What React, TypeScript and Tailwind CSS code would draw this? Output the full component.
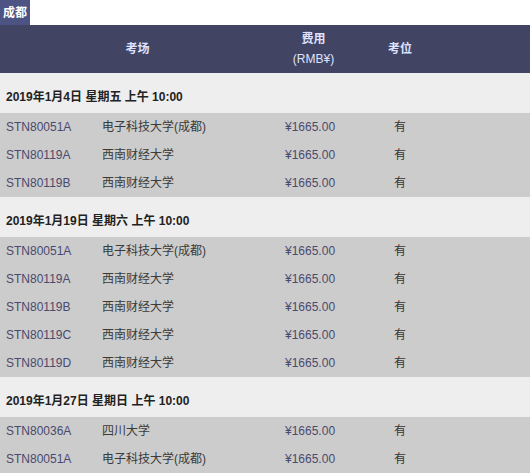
import React from "react";

type Row = { code: string; name: string };
type Group = { date: string; rows: Row[] };

const groups: Group[] = [
  {
    date: "2019年1月4日 星期五 上午 10:00",
    rows: [
      { code: "STN80051A", name: "电子科技大学(成都)" },
      { code: "STN80119A", name: "西南财经大学" },
      { code: "STN80119B", name: "西南财经大学" },
    ],
  },
  {
    date: "2019年1月19日 星期六 上午 10:00",
    rows: [
      { code: "STN80051A", name: "电子科技大学(成都)" },
      { code: "STN80119A", name: "西南财经大学" },
      { code: "STN80119B", name: "西南财经大学" },
      { code: "STN80119C", name: "西南财经大学" },
      { code: "STN80119D", name: "西南财经大学" },
    ],
  },
  {
    date: "2019年1月27日 星期日 上午 10:00",
    rows: [
      { code: "STN80036A", name: "四川大学" },
      { code: "STN80051A", name: "电子科技大学(成都)" },
    ],
  },
];

const font = { fontFamily: '"Liberation Sans", "Noto Sans CJK SC", sans-serif' };

export default function App() {
  return (
    <div className="w-[530px] h-[474px] overflow-hidden bg-white text-[12px]" style={font}>
      <div className="flex h-[25px]">
        <div className="w-[30px] bg-[#4d5383] text-white font-bold flex items-center justify-center leading-none">
          成都
        </div>
      </div>
      <div className="grid grid-cols-[275px_77px_96px_1fr] h-[48px] bg-[#424464] text-[#dfe2ff]">
        <div className="flex items-center justify-center font-bold">考场</div>
        <div className="flex flex-col items-center justify-center leading-[20px]">
          <span className="font-bold">费用</span>
          <span>(RMB¥)</span>
        </div>
        <div className="flex items-center justify-center font-bold">考位</div>
        <div />
      </div>
      {groups.map((g, gi) => (
        <div key={gi}>
          <div className="h-[40px] bg-[#eeeeee] pt-[16px] pl-[6px] leading-[16px] font-bold text-[#222222]">
            {g.date}
          </div>
          {g.rows.map((r, ri) => (
            <div
              key={ri}
              className="grid grid-cols-[102px_173px_77px_96px_1fr] h-[28px] items-center bg-[#cccccc]"
            >
              <div className="pl-[6px] text-[#4a4a6e]">{r.code}</div>
              <div className="text-[#3a3a3a]">{r.name}</div>
              <div className="pl-[10px] text-[#4a4a6e]">¥1665.00</div>
              <div className="text-center text-[#333333]">有</div>
              <div />
            </div>
          ))}
        </div>
      ))}
    </div>
  );
}
